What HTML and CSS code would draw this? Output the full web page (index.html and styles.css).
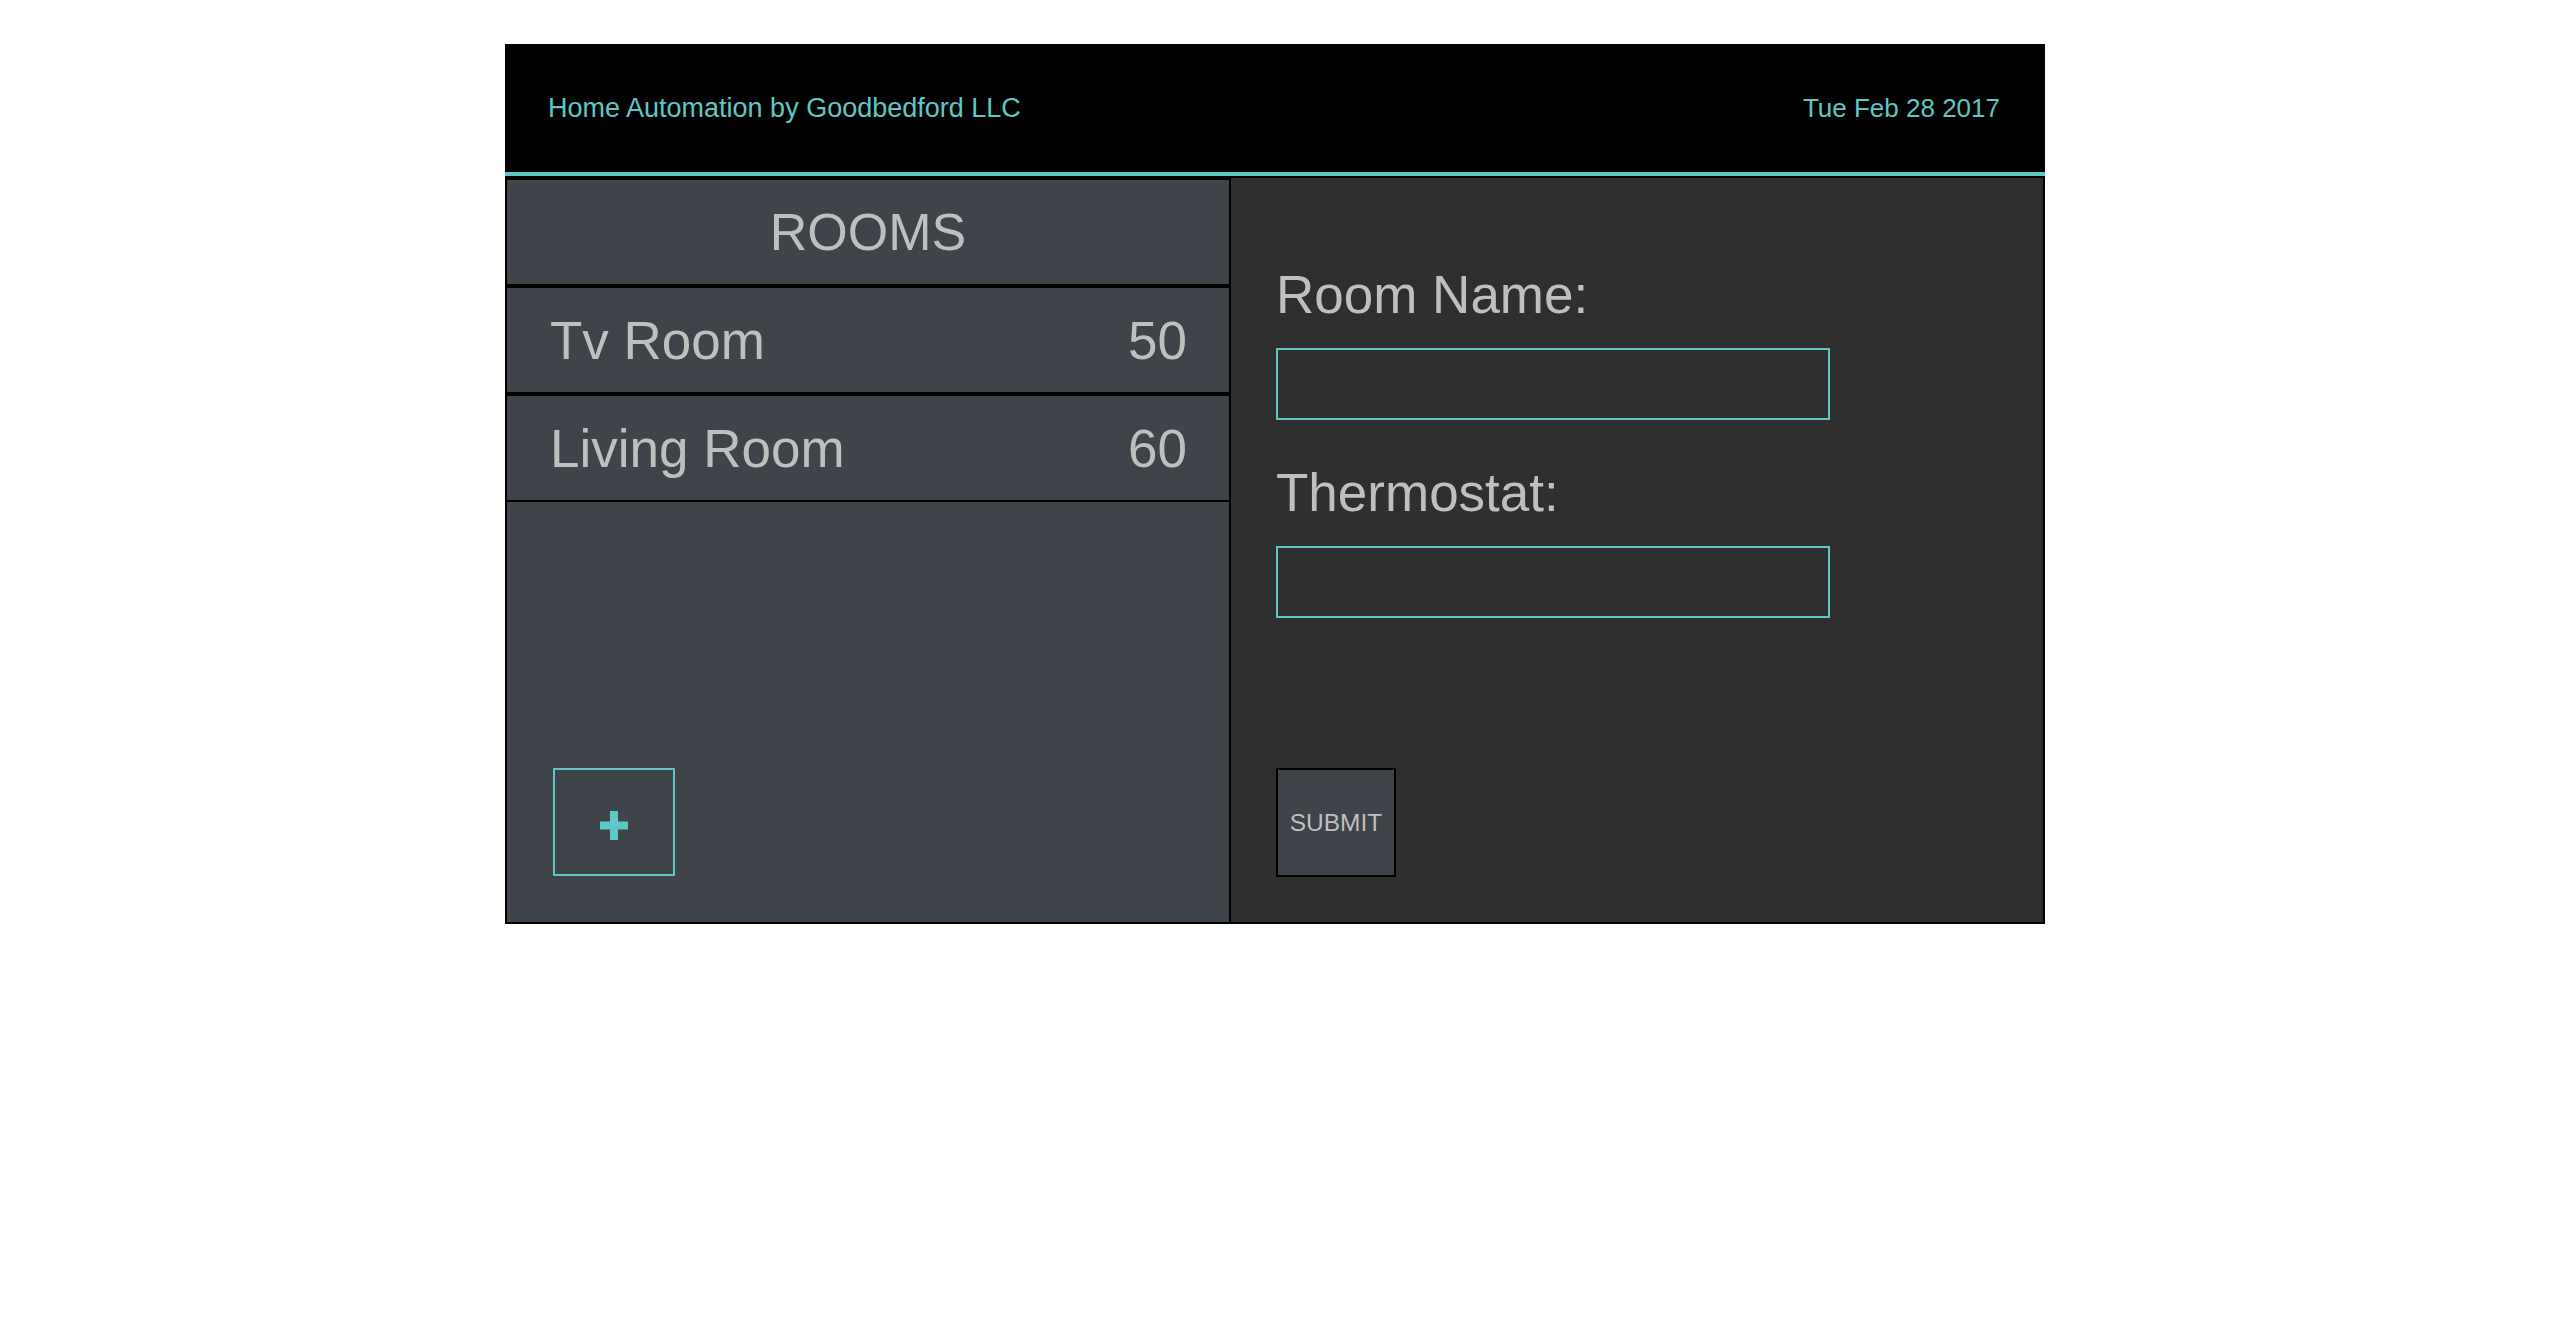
FILE: index.html
```html
<!DOCTYPE html>
<html lang="en">
<head>
<meta charset="utf-8">
<title>Home Automation</title>
<link rel="stylesheet" href="styles.css">
</head>
<body>
<div class="app">
  <header class="topbar">
    <span class="brand">Home Automation by Goodbedford LLC</span>
    <span class="date">Tue Feb 28 2017</span>
  </header>
  <main class="panels">
    <section class="rooms">
      <div class="rooms-title">ROOMS</div>
      <div class="room-row"><span>Tv Room</span><span>50</span></div>
      <div class="room-row"><span>Living Room</span><span>60</span></div>
      <button class="add-btn" type="button" aria-label="Add room">
        <svg width="28" height="29" viewBox="0 0 28 29"><path d="M10 0h8v10.5h10v8H18V29h-8V18.5H0v-8h10z" fill="#5ec8c8"/></svg>
      </button>
    </section>
    <section class="room-form">
      <label class="field-label">Room Name:</label>
      <input class="field-input first" type="text">
      <label class="field-label second">Thermostat:</label>
      <input class="field-input" type="text">
      <button class="submit-btn" type="button">SUBMIT</button>
    </section>
  </main>
</div>
</body>
</html>
```

FILE: styles.css
```css
html, body {
  margin: 0;
  padding: 0;
  background: #ffffff;
}

body {
  font-family: "Liberation Sans", Arial, Helvetica, sans-serif;
}

.app {
  width: 1540px;
  margin: 44px auto 0;
}

.topbar {
  height: 128px;
  background: #000000;
  border-bottom: 4px solid #5ec8c8;
  display: flex;
  align-items: center;
  justify-content: space-between;
  padding: 0 45px 0 43px;
  color: #5ec8c8;
}

.brand {
  font-size: 27px;
}

.date {
  font-size: 26px;
}

.panels {
  display: flex;
  height: 748px;
}

.rooms {
  width: 722px;
  border: 2px solid #000000;
  background: #3f434a;
  display: flex;
  flex-direction: column;
}

.rooms-title {
  height: 104px;
  border-top: 2px solid #000000;
  border-bottom: 2px solid #000000;
  display: flex;
  align-items: center;
  justify-content: center;
  font-size: 52px;
  color: #bfbfbf;
}

.room-row {
  height: 104px;
  border-top: 2px solid #000000;
  border-bottom: 2px solid #000000;
  display: flex;
  align-items: center;
  justify-content: space-between;
  padding: 0 42px 0 43px;
  font-size: 53px;
  color: #bfbfbf;
}

.add-btn {
  margin: auto 0 46px 46px;
  width: 122px;
  height: 108px;
  box-sizing: border-box;
  border: 2px solid #5ec8c8;
  background: transparent;
  display: flex;
  align-items: center;
  justify-content: center;
  padding: 6px 0 0 0;
}

.room-form {
  flex: 1;
  border-top: 2px solid #000000;
  border-right: 2px solid #000000;
  border-bottom: 2px solid #000000;
  background: #2f2f2f;
  display: flex;
  flex-direction: column;
  align-items: flex-start;
  padding: 87px 0 0 45px;
}

.field-label {
  font-size: 53px;
  line-height: 60px;
  color: #bfbfbf;
}

.field-label.second {
  margin-top: 43px;
}

.field-input {
  margin-top: 23px;
  width: 554px;
  height: 72px;
  box-sizing: border-box;
  border: 2px solid #5ec8c8;
  background: transparent;
  outline: none;
}

.submit-btn {
  margin: auto 0 45px 0;
  width: 120px;
  height: 109px;
  box-sizing: border-box;
  border: 2px solid #000000;
  background: #3f434a;
  color: #bfbfbf;
  font-family: "Liberation Sans", Arial, Helvetica, sans-serif;
  font-size: 24.5px;
  padding: 0;
}
```
